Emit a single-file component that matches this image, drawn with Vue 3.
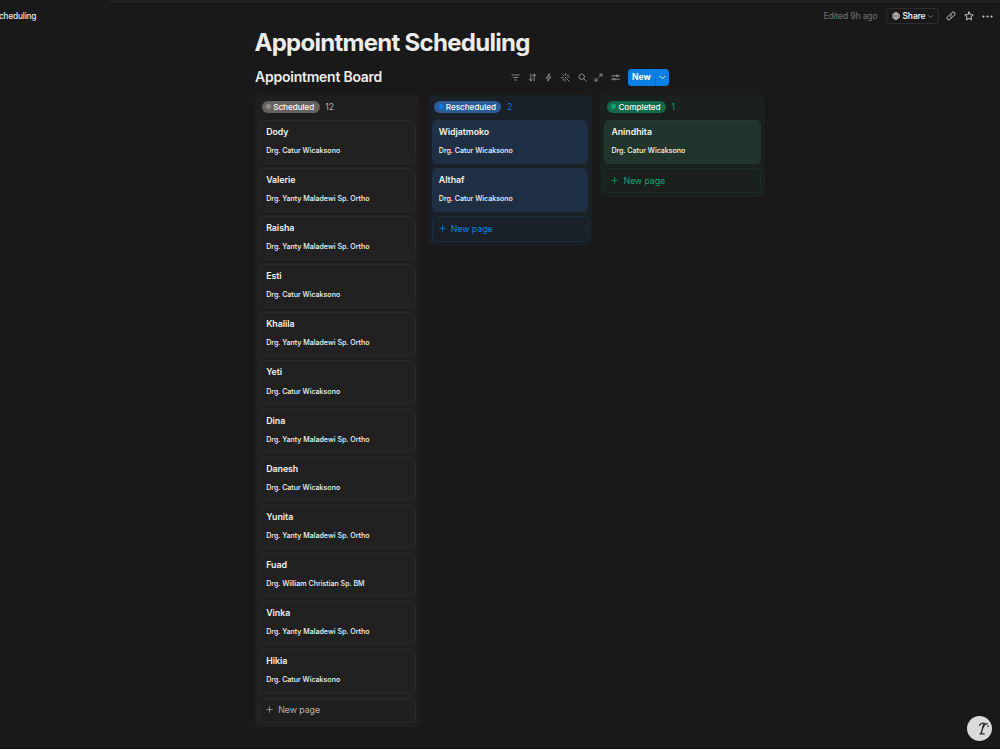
<template>
  <div class="page">
    <div class="topstrip"></div>

    <header class="topbar">
      <span class="crumb">cheduling</span>
      <div class="actions">
        <span class="edited">Edited 9h ago</span>
        <button class="share">
          <svg class="globe" viewBox="0 0 16 16">
            <circle cx="8" cy="8" r="6.8" />
            <ellipse cx="8" cy="8" rx="3" ry="6.8" />
            <path d="M8 1.2v13.6M1.8 5.6h12.4M1.8 10.4h12.4" />
          </svg>
          <span class="share-text">Share</span>
          <svg class="chevron" viewBox="0 0 10 10"><path d="M1.5 3.5 5 7l3.5-3.5" /></svg>
        </button>
        <svg class="top-icon link" viewBox="0 0 20 20">
          <path d="M8.3 11.7a3.6 3.6 0 0 0 5.1.1l3.5-3.5a3.65 3.65 0 0 0-5.2-5.2L9.4 5.4" />
          <path d="M11.7 8.3a3.6 3.6 0 0 0-5.1-.1l-3.5 3.5a3.65 3.65 0 0 0 5.2 5.2l2.3-2.3" />
        </svg>
        <svg class="top-icon star" viewBox="0 0 20 20">
          <path d="m10 1.8 2.4 5.5 6 .6-4.5 4 1.3 5.9-5.2-3.1-5.2 3.1 1.3-5.9-4.5-4 6-.6z" />
        </svg>
        <svg class="top-icon dots" viewBox="0 0 20 20">
          <circle cx="2.6" cy="10" r="1.9" /><circle cx="10" cy="10" r="1.9" /><circle cx="17.4" cy="10" r="1.9" />
        </svg>
      </div>
    </header>

    <main class="content">
      <h1>Appointment Scheduling</h1>

      <div class="board-head">
        <h2>Appointment Board</h2>
        <div class="tools">
          <svg v-for="icon in toolIcons" :key="icon.name" viewBox="0 0 16 16">
            <path :d="icon.path" />
          </svg>
        </div>
        <div class="new-button">
          <button class="new-main">New</button>
          <button class="new-more">
            <svg viewBox="0 0 10 10"><path d="M1.5 3.2 5 6.7l3.5-3.5" /></svg>
          </button>
        </div>
      </div>

      <div class="board">
        <section v-for="column in columns" :key="column.name" class="column" :class="column.color">
          <div class="column-head">
            <span class="pill"><i class="dot"></i><span>{{ column.name }}</span></span>
            <span class="count">{{ column.cards.length }}</span>
          </div>
          <article v-for="card in column.cards" :key="card.name" class="card">
            <h3>{{ card.name }}</h3>
            <p>{{ card.doctor }}</p>
          </article>
          <button class="new-page">
            <svg viewBox="0 0 10 10"><path d="M5 1v8M1 5h8" /></svg>
            <span>New page</span>
          </button>
        </section>
      </div>
    </main>

    <button class="assistant">
      <svg viewBox="0 0 26 26">
        <path d="M13 9.6c1-2 2.8-2.6 5-1.9-1.5 2.3-1.9 4.8-2.3 7.3-.3 1.9-.9 3.1-2 3.6h4.2" />
        <path d="M16.9 11.4c.8-2.1 2.3-3.4 4.1-3.5M21.5 10.4l.5.2" />
      </svg>
    </button>
  </div>
</template>

<script setup>
const catur = 'Drg. Catur Wicaksono';
const yanty = 'Drg. Yanty Maladewi Sp. Ortho';
const william = 'Drg. William Christian Sp. BM';

const columns = [
  {
    name: 'Scheduled',
    color: 'gray',
    cards: [
      { name: 'Dody', doctor: catur },
      { name: 'Valerie', doctor: yanty },
      { name: 'Raisha', doctor: yanty },
      { name: 'Esti', doctor: catur },
      { name: 'Khalila', doctor: yanty },
      { name: 'Yeti', doctor: catur },
      { name: 'Dina', doctor: yanty },
      { name: 'Danesh', doctor: catur },
      { name: 'Yunita', doctor: yanty },
      { name: 'Fuad', doctor: william },
      { name: 'Vinka', doctor: yanty },
      { name: 'Hikia', doctor: catur }
    ]
  },
  {
    name: 'Rescheduled',
    color: 'blue',
    cards: [
      { name: 'Widjatmoko', doctor: catur },
      { name: 'Althaf', doctor: catur }
    ]
  },
  {
    name: 'Completed',
    color: 'green',
    cards: [{ name: 'Anindhita', doctor: catur }]
  }
];

// Toolbar icons, left to right
const toolIcons = [
  { name: 'filter', path: 'M1.5 3.5h13M4 8h8M6.2 12.5h3.6' },
  { name: 'sort', path: 'M5 2v12M1.8 10.8 5 14l3.2-3.2M11 14V2M7.8 5.2 11 2l3.2 3.2' },
  { name: 'automation', path: 'M9.6 1.5 3.8 9h3.7l-1 5.5L12.2 7H8.5z' },
  { name: 'magic', path: 'M7.5 7.5 14.5 14.5M8 1v2.5M7 12v2.5M1 8h2.5M12 7h2.5M2.5 2.5l2.2 2.2M13 2.5l-2.2 2.2M2.5 13l2.2-2.2' },
  { name: 'search', path: 'M11.5 6.8a4.8 4.8 0 1 1-9.6 0a4.8 4.8 0 0 1 9.6 0M10.2 10.2 14.5 14.5' },
  { name: 'expand', path: 'M9.2 6.8 14 2M9.8 2H14v4.2M6.8 9.2 2 14M2 9.8V14h4.2' },
  { name: 'settings', path: 'M1 5h8M12.4 5H15M12.4 5a1.7 1.7 0 1 1-3.4 0a1.7 1.7 0 0 1 3.4 0M1 11h2.6M7 11H15M7 11a1.7 1.7 0 1 1-3.4 0a1.7 1.7 0 0 1 3.4 0' }
];
</script>

<style>
body {
  background: #191919;
}
</style>

<style scoped>
.page {
  position: relative;
  box-sizing: border-box;
  width: 1000px;
  height: 749px;
  overflow: hidden;
  background: #191919;
  border-bottom: 1px solid #100a0c;
  color: #ececeb;
  font-family: Inter, "Liberation Sans", sans-serif;
}

.page * {
  box-sizing: border-box;
}

h1, h2, h3, p {
  margin: 0;
}

button {
  padding: 0;
  border: 0;
  background: none;
  color: inherit;
  font-family: inherit;
}

svg {
  display: block;
  flex: none;
  fill: none;
  stroke: currentColor;
  stroke-linecap: round;
  stroke-linejoin: round;
}

.topstrip {
  height: 3px;
  margin-left: 110px;
  background: #202020;
}

.topbar {
  display: flex;
  align-items: center;
  justify-content: space-between;
  height: 26px;
  padding-right: 7.5px;
}

.crumb {
  margin-left: -1px;
  font-size: 8.3px;
  font-weight: 500;
  letter-spacing: -0.2px;
}

.actions {
  display: flex;
  align-items: center;
}

.edited {
  margin-right: 8px;
  color: #737371;
  font-size: 8.6px;
  letter-spacing: -0.15px;
}

.share {
  display: flex;
  align-items: center;
  width: 53px;
  height: 16px;
  margin-right: 7px;
  padding-left: 5px;
  border: 1px solid #2d2d2d;
  border-radius: 3px;
}

.share-text {
  margin-left: 3px;
  font-size: 8.4px;
  font-weight: 600;
  letter-spacing: -0.1px;
}

.globe {
  width: 8px;
  height: 8px;
  stroke-width: 1.3;
}

.chevron {
  width: 5px;
  height: 5px;
  margin-left: 3px;
  color: #8a8a8a;
  stroke-width: 1.7;
}

.top-icon {
  width: 10px;
  height: 10px;
  color: #d0d0cf;
  stroke-width: 1.9;
}

.star {
  margin-left: 8px;
}

.dots {
  width: 11px;
  height: 11px;
  margin-left: 8px;
  fill: currentColor;
  stroke: none;
}

.content {
  width: 510px;
  margin-left: 255px;
}

h1 {
  height: 28px;
  margin-left: -0.5px;
  font-size: 24px;
  font-weight: 700;
  letter-spacing: -0.72px;
  line-height: 27px;
  white-space: nowrap;
}

.board-head {
  display: flex;
  align-items: center;
  height: 20px;
  margin-top: 10px;
}

h2 {
  width: 256px;
  font-size: 14px;
  font-weight: 600;
  letter-spacing: -0.24px;
  line-height: 20px;
  white-space: nowrap;
}

.tools {
  display: flex;
  gap: 7.65px;
  color: #a3a3a1;
}

.tools svg {
  width: 9px;
  height: 9px;
  stroke-width: 1.4;
}

.new-button {
  display: flex;
  width: 41px;
  height: 17px;
  margin-left: 8px;
  border-radius: 3.5px;
  background: #0b7fe5;
  color: #fff;
}

.new-main {
  width: 28px;
  border-right: 1px solid #0b70ca;
  font-size: 8.5px;
  font-weight: 700;
}

.new-more {
  display: flex;
  align-items: center;
  justify-content: center;
  width: 13px;
}

.new-more svg {
  width: 7px;
  height: 7px;
  stroke-width: 1.3;
}

.board {
  display: flex;
  align-items: flex-start;
  gap: 7.8px;
  margin-top: 8px;
}

.column {
  width: 164.8px;
  padding: 0 4px 3.8px;
  border-radius: 5px;
  background: var(--column);
}

.column-head {
  display: flex;
  align-items: center;
  height: 24.7px;
  padding: 0 0 1.4px 2.5px;
}

.pill {
  display: flex;
  align-items: center;
  height: 12px;
  padding: 0 5.5px 0 4.5px;
  border-radius: 6px;
  background: var(--pill);
  color: #f8f8f7;
  font-size: 8.2px;
  font-weight: 500;
  letter-spacing: -0.06px;
  line-height: 12px;
}

.dot {
  width: 4.5px;
  height: 4.5px;
  margin-right: 2.7px;
  border-radius: 50%;
  background: var(--dot);
}

.count {
  margin-left: 5.5px;
  color: var(--accent);
  font-size: 8.6px;
}

.card {
  height: 44.2px;
  margin-bottom: 3.98px;
  padding: 4.9px 6.2px 0;
  border: 1px solid var(--card-line);
  border-radius: 5px;
  background: var(--card);
}

h3 {
  color: #f3f3f2;
  font-size: 8.8px;
  font-weight: 600;
  letter-spacing: -0.03px;
  line-height: 11px;
}

p {
  margin-top: 9.2px;
  color: #f6f6f5;
  font-size: 7.1px;
  font-weight: 500;
  letter-spacing: -0.02px;
  line-height: 9px;
  white-space: nowrap;
}

.new-page {
  display: flex;
  align-items: center;
  width: 100%;
  height: 25.5px;
  padding: 0 0 1px 6.2px;
  border: 1px solid var(--line);
  border-radius: 5px;
  color: var(--accent);
  font-size: 8.8px;
  letter-spacing: -0.05px;
}

.new-page svg {
  width: 7px;
  height: 7px;
  margin-right: 5px;
}

.gray {
  --column: #1f1f1f;
  --pill: #65635e;
  --dot: #8e8c88;
  --card: #212121;
  --card-line: #2a2a2a;
  --line: #2a2a2a;
  --accent: #b2b1ae;
}

.blue {
  --column: #192027;
  --pill: #2c5c98;
  --dot: #0b7fe5;
  --card: #1f2f44;
  --card-line: #1f3047;
  --line: #1b2c40;
  --accent: #0b80e6;
}

.green {
  --column: #1a211d;
  --pill: #116a49;
  --dot: #12a571;
  --card: #22352c;
  --card-line: #22372d;
  --line: #1b3026;
  --accent: #10a26c;
}

.assistant {
  position: absolute;
  right: 8px;
  bottom: 7px;
  width: 25px;
  height: 25px;
  border-radius: 50%;
  background: #dadada;
  color: #252525;
}

.assistant svg {
  width: 25px;
  height: 25px;
  stroke-width: 1.4;
}
</style>
